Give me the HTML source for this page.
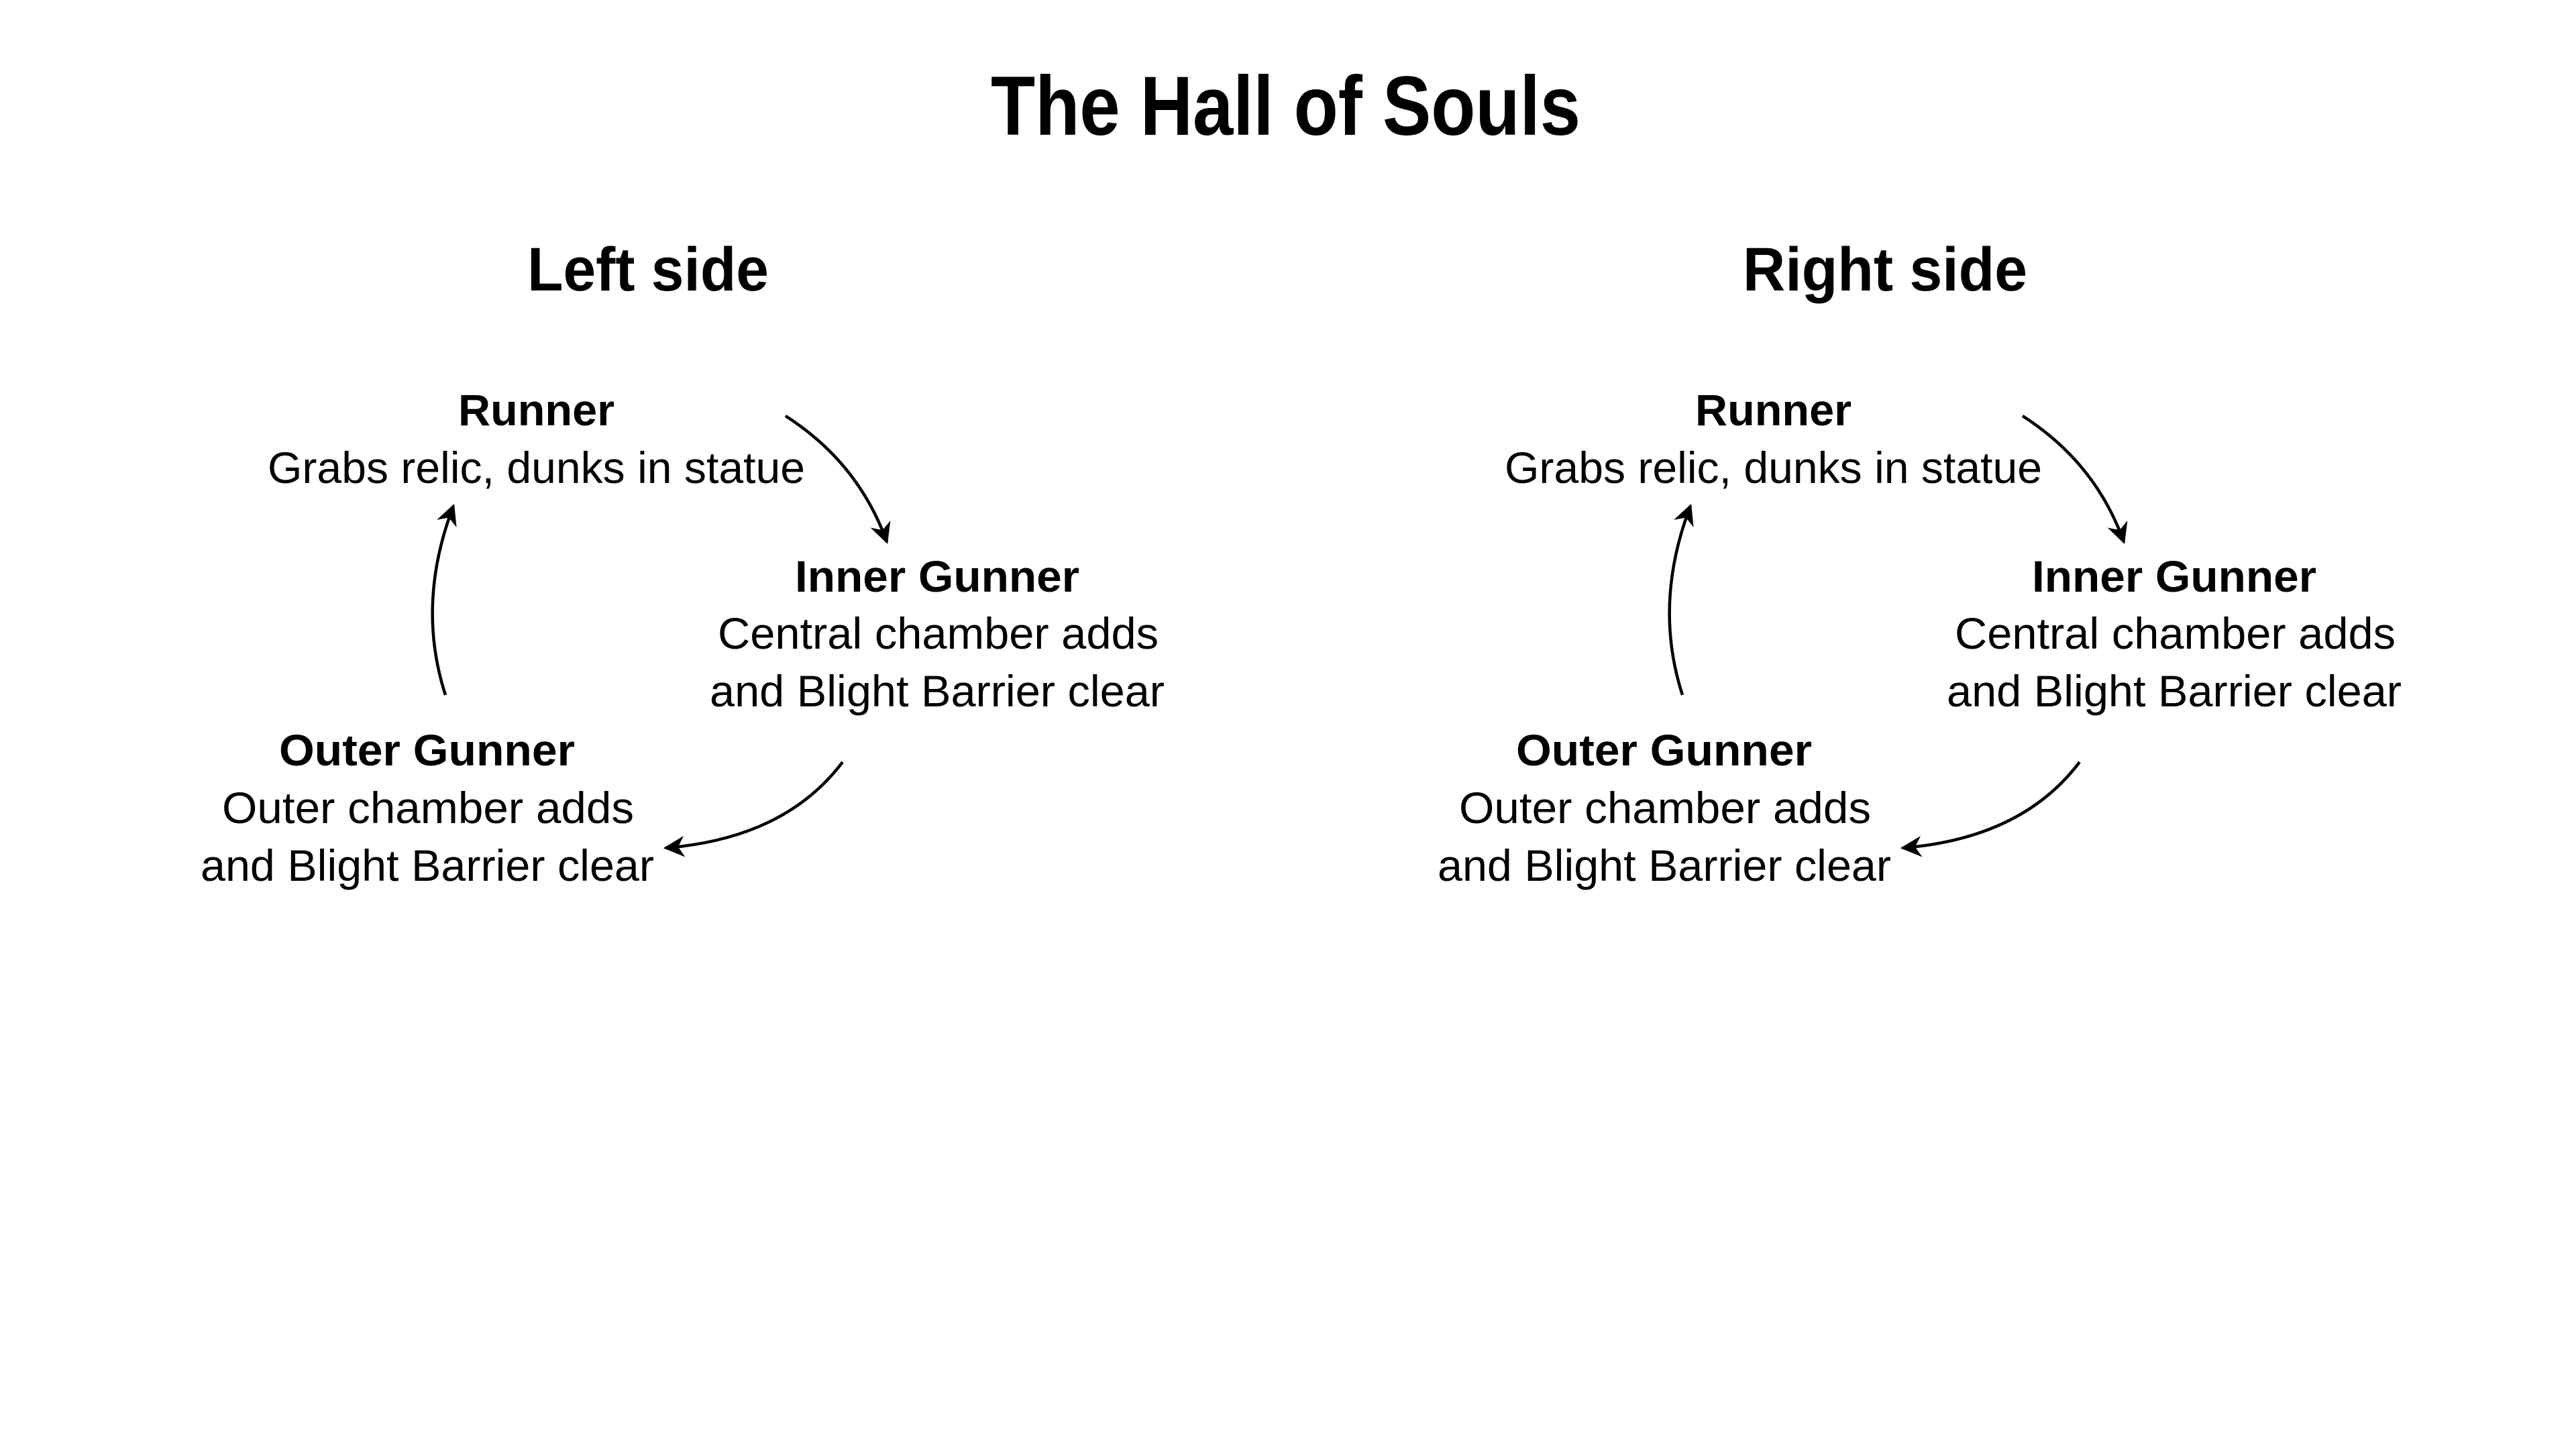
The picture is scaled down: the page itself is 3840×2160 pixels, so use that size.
<!DOCTYPE html>
<html><head><meta charset="utf-8"><style>
html,body{margin:0;padding:0;background:#fff;width:3840px;height:2160px;overflow:hidden}
svg{display:block}
text{font-family:"Liberation Sans",sans-serif;fill:#000}
.b{font-weight:bold}
</style></head><body>
<svg width="3840" height="2160" viewBox="0 0 3840 2160" xmlns="http://www.w3.org/2000/svg">
<defs>
<marker id="ah" viewBox="0 0 10 10" refX="9" refY="5" markerWidth="7" markerHeight="7" orient="auto" markerUnits="strokeWidth">
<path d="M0,0 L10,5 L0,10 L3,5 Z" fill="#000"/>
</marker>
</defs>
<text class="b" x="1477" y="201" font-size="125" textLength="879" lengthAdjust="spacingAndGlyphs">The Hall of Souls</text>
<text class="b" x="786" y="433" font-size="92" textLength="360" lengthAdjust="spacingAndGlyphs">Left side</text>
<text class="b" x="2598" y="433" font-size="92" textLength="424" lengthAdjust="spacingAndGlyphs">Right side</text>
<g id="grp">
<text class="b" x="683" y="634" font-size="66" textLength="233" lengthAdjust="spacingAndGlyphs">Runner</text>
<text x="399" y="720" font-size="66" textLength="801" lengthAdjust="spacingAndGlyphs">Grabs relic, dunks in statue</text>
<text class="b" x="1185" y="882" font-size="66" textLength="424" lengthAdjust="spacingAndGlyphs">Inner Gunner</text>
<text x="1070" y="967" font-size="66" textLength="657" lengthAdjust="spacingAndGlyphs">Central chamber adds</text>
<text x="1058" y="1053" font-size="66" textLength="678" lengthAdjust="spacingAndGlyphs">and Blight Barrier clear</text>
<text class="b" x="416" y="1141" font-size="66" textLength="441" lengthAdjust="spacingAndGlyphs">Outer Gunner</text>
<text x="331" y="1227" font-size="66" textLength="614" lengthAdjust="spacingAndGlyphs">Outer chamber adds</text>
<text x="299" y="1313" font-size="66" textLength="676" lengthAdjust="spacingAndGlyphs">and Blight Barrier clear</text>
<g fill="none" stroke="#000" stroke-width="4.5">
<path d="M1171,620 Q1280,690 1322,808" marker-end="url(#ah)"/>
<path d="M1256,1136 Q1170,1250 992,1264" marker-end="url(#ah)"/>
<path d="M664,1036 Q620,900 676,754" marker-end="url(#ah)"/>
</g>
</g>
<use href="#grp" x="1844" y="0"/>
</svg>
</body></html>
